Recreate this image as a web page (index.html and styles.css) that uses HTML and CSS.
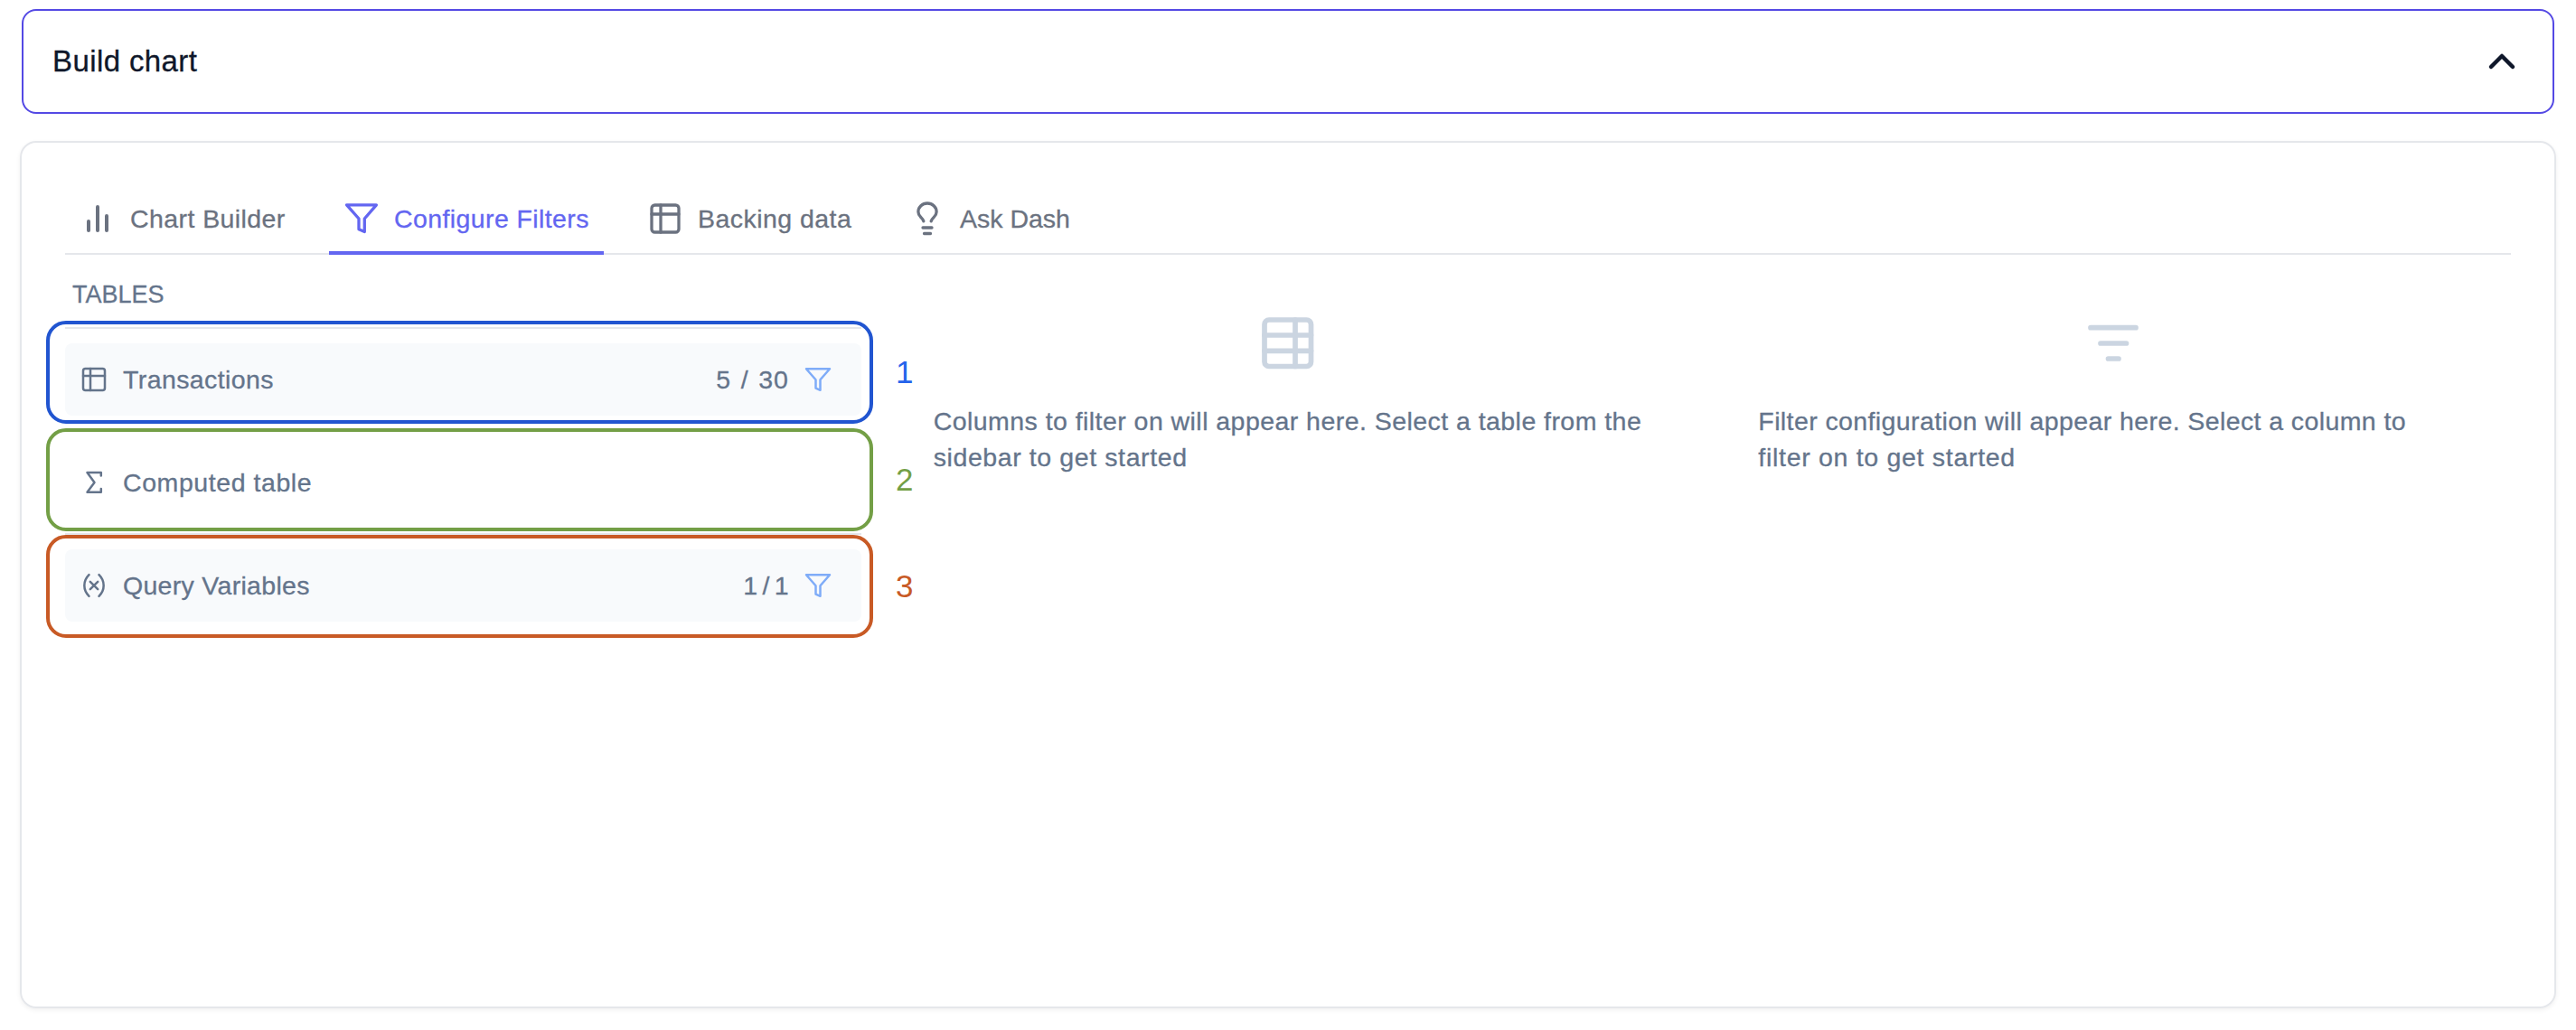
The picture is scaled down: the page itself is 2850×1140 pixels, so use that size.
FILE: index.html
```html
<!DOCTYPE html>
<html lang="en">
<head>
<meta charset="utf-8">
<title>Build chart</title>
<link rel="stylesheet" href="styles.css">
</head>
<body>
<header class="build-header">
  <h1 class="build-title">Build chart</h1>
  <svg class="chevron" viewBox="0 0 40 40"><path d="M8 26 20 14 32 26"/></svg>
</header>
<main class="panel">
  <nav class="tabs">
    <a class="tab"><svg class="icon bars" viewBox="0 0 40 40"><path d="M10 23V33M20 7V33M30 17V33"/></svg><span class="label label-chart">Chart Builder</span></a>
    <a class="tab active"><svg class="icon" viewBox="0 0 40 40"><path d="M3.600 4.800H36.400L23.300 20V34.500L17 31.800V20Z"/></svg><span class="label label-filters">Configure Filters</span></a>
    <a class="tab"><svg class="icon" viewBox="0 0 40 40"><rect x="5" y="5" width="30" height="30" rx="3.500"/><path d="M5 15H35M15 5V35"/></svg><span class="label label-data">Backing data</span></a>
    <a class="tab"><svg class="icon" viewBox="0 0 40 40"><path d="M15.800 22.800C14.500 18.500 9.900 18 9.900 12.500A10.100 9.500 0 0 1 30.100 12.500C30.100 18 25.500 18.500 24.200 22.800M15 30H25M16.500 36.500H23.500"/></svg><span class="label label-ask">Ask Dash</span></a>
  </nav>
  <div class="columns">
    <section class="sidebar">
      <h2 class="sidebar-title">TABLES</h2>
      <ul class="table-list">
        <li class="entry">
          <div class="row shaded">
            <svg class="row-icon" viewBox="0 0 32 32"><rect x="4" y="4" width="24" height="24" rx="2.500"/><path d="M4 12H28M12 4V28"/></svg>
            <span class="name name-transactions">Transactions</span>
            <span class="count count-thirty">5 / 30</span>
            <svg class="row-icon funnel" viewBox="0 0 32 32"><path d="M3 4.200H29L18.500 16.200V27.800L13.500 25.600V16.200Z"/></svg>
          </div>
          <div class="outline blue"><span class="marker">1</span></div>
        </li>
        <li class="entry">
          <div class="row">
            <svg class="row-icon" viewBox="0 0 32 32"><path d="M23.800 8.500V5H8.500L16.500 16 8.500 26.700H23.800V23"/></svg>
            <span class="name name-computed">Computed table</span>
          </div>
          <div class="outline green"><span class="marker">2</span></div>
        </li>
        <li class="entry">
          <div class="row shaded">
            <svg class="row-icon" viewBox="0 0 32 32"><path d="M10.500 4.200C3.600 11 3.600 21 10.500 27.800M21.500 4.200C28.400 11 28.400 21 21.500 27.800M11.800 11.800 20.200 20.200M20.200 11.800 11.800 20.200"/></svg>
            <span class="name name-query">Query Variables</span>
            <span class="count count-one">1 / 1</span>
            <svg class="row-icon funnel" viewBox="0 0 32 32"><path d="M3 4.200H29L18.500 16.200V27.800L13.500 25.600V16.200Z"/></svg>
          </div>
          <div class="outline orange"><span class="marker">3</span></div>
        </li>
      </ul>
    </section>
    <section class="empty">
      <svg class="empty-icon" viewBox="0 0 64 64"><rect x="6" y="6" width="51.500" height="51.500" rx="5"/><path d="M6 23H57.500M6 40.300H57.500M40 6V57.500"/></svg>
      <p class="hint"><span class="line hint-a">Columns to filter on will appear here. Select a table from the</span> <span class="line hint-b">sidebar to get started</span></p>
    </section>
    <section class="empty">
      <svg class="empty-icon" viewBox="0 0 64 64"><path d="M7 14.700H57M18 32H46.500M26.500 49H38"/></svg>
      <p class="hint"><span class="line hint-c">Filter configuration will appear here. Select a column to</span> <span class="line hint-d">filter on to get started</span></p>
    </section>
  </div>
</main>
</body>
</html>
```
FILE: styles.css
```css
* { box-sizing: border-box; }
body {
  margin: 0;
  padding: 10px 22px 24px;
  background: #fff;
  font: 28.5px/40px "Liberation Sans", Arial, sans-serif;
  -webkit-text-stroke: 0.3px currentColor;
  color: #64748b;
}
h1, h2, p, ul { margin: 0; padding: 0; font-weight: 400; }
ul { list-style: none; }
svg { flex: none; fill: none; stroke: currentColor; stroke-width: 3.3; stroke-linecap: round; stroke-linejoin: round; }

.build-header {
  display: flex;
  align-items: center;
  justify-content: space-between;
  height: 116px;
  margin: 0 2px;
  padding: 0 36px 0 32px;
  border: 2px solid #5449e4;
  border-radius: 16px;
  color: #0f172a;
}
.build-title { font-size: 33px; letter-spacing: 0.4px; }
.chevron { width: 40px; height: 40px; stroke-width: 4.5; }

.panel {
  height: 960px;
  margin-top: 30px;
  padding: 46px 48px;
  border: 2px solid #e5e7eb;
  border-radius: 18px;
  box-shadow: 0 2px 5px rgba(0, 0, 0, 0.06);
}
.tabs { display: flex; gap: 32px; height: 78px; border-bottom: 2px solid #e5e7eb; }
.tab {
  display: flex;
  align-items: center;
  gap: 16px;
  height: 78px;
  padding: 0 16px 2px;
  color: #6b7280;
}
.tab.active { color: #6366f1; box-shadow: inset 0 -4px #6366f1; }
.icon { width: 40px; height: 40px; }
.bars { stroke-width: 4; }
.label, .name, .count, .line { white-space: nowrap; }
.label-chart { width: 172px; letter-spacing: 0.42px; }
.label-filters { width: 216px; letter-spacing: 0.4px; }
.label-data { width: 170px; letter-spacing: 0.45px; }
.label-ask { width: 122px; }

.columns { display: grid; grid-template-columns: repeat(3, 1fr); gap: 32px; }
.sidebar-title { padding: 24px 8px 16px; font-size: 27px; line-height: 40px; }
.entry { position: relative; padding: 16px 0; border-top: 2px solid #e5e7eb; }
.row { display: flex; align-items: center; height: 80px; padding: 0 32px 0 16px; border-radius: 8px; }
.shaded { background: #f8fafc; }
.row-icon { width: 32px; height: 32px; margin-right: 16px; stroke-width: 2.5; }
.funnel { margin: 0 0 0 16px; color: #7facf8; }
.name { flex: 1; letter-spacing: 0.4px; }
.name-computed { letter-spacing: 0.57px; }
.name-query { letter-spacing: 0.3px; }
.count-thirty { letter-spacing: 0.9px; word-spacing: 1.8px; }
.count-one { word-spacing: -2.5px; }
.outline {
  position: absolute;
  inset: -9px -13px auto -21px;
  height: 114px;
  border: 4px solid;
  border-radius: 22px;
}
.blue { color: #2155d0; }
.green { top: -4px; color: #739f46; }
.orange { color: #c85a25; top: 0; }
.marker { position: absolute; left: 936px; top: 33px; font-size: 35px; line-height: 40px; -webkit-text-stroke: 0; }
.blue .marker { color: #2563eb; }

.empty { padding: 66px 48px 0; display: flex; flex-direction: column; }
.empty-icon { width: 64px; height: 64px; align-self: center; stroke-width: 5.7; color: #cbd5e1; }
.hint { margin-top: 34px; }
.line { display: block; letter-spacing: 0.45px; }
.hint-b { letter-spacing: 0.6px; }
.hint-c { letter-spacing: 0.4px; }
.hint-d { letter-spacing: 0.7px; }
```
